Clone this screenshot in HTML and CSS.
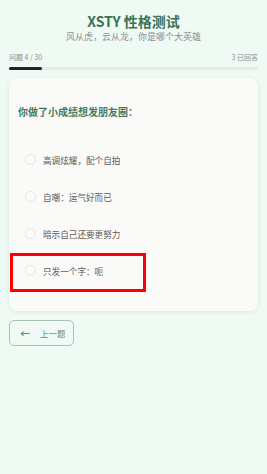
FILE: index.html
```html
<!DOCTYPE html>
<html lang="zh">
  <head>
    <meta charset="UTF-8" />
    <meta name="viewport" content="width=device-width, initial-scale=1.0" />
    <title>XSTY 性格测试</title>
    <link rel="stylesheet" href="styles.css">
  </head>
  <body>
    <div class="header">
      <h1>XSTY 性格测试</h1>
      <p class="subtitle">风从虎，云从龙，你是哪个大英雄</p>
    </div>

    <div class="progress-info">
      <span>问题 4 / 30</span>
      <span>3 已回答</span>
    </div>
    <div class="progress-bar">
      <div class="progress-fill" style="width: 13.3%"></div>
    </div>

    <div class="card">
      <h3 class="question">你做了小成绩想发朋友圈：</h3>
      <div class="options">
        <div class="option"><span class="radio"></span><span>高调炫耀，配个自拍</span></div>
        <div class="option"><span class="radio"></span><span>自嘲：运气好而已</span></div>
        <div class="option"><span class="radio"></span><span>暗示自己还要更努力</span></div>
        <div class="option marked"><span class="radio"></span><span>只发一个字：呃</span></div>
      </div>
    </div>

    <button class="back-btn"><span class="arrow">&larr;</span>上一题</button>
  </body>
</html>
```

FILE: styles.css
```css
body {
  font-family: "Noto Sans CJK SC", "Noto Sans", sans-serif;
  background-color: #f0faf5;
  margin: 0;
  padding: 12px 9px 0;
  color: #555;
}
.header {
  text-align: center;
}
h1 {
  margin: 0;
  font-size: 14px;
  line-height: 18px;
  color: #3a7356;
}
.subtitle {
  margin: 1px 0 0;
  font-size: 9px;
  line-height: 12px;
  color: #8a8f8c;
}
.progress-info {
  display: flex;
  justify-content: space-between;
  margin-top: 9px;
  font-size: 7px;
  line-height: 10px;
  color: #8a8f8c;
}
.progress-bar {
  margin-top: 5px;
  height: 3px;
  background-color: #e6ebe8;
  border-radius: 2px;
}
.progress-fill {
  height: 100%;
  background-color: #222;
  border-radius: 2px;
}
.card {
  margin-top: 8px;
  padding: 27px 9px 22px;
  background-color: #fafaf8;
  border-radius: 8px;
  box-shadow: 0 1px 5px rgba(0, 0, 0, 0.08);
}
.question {
  margin: 0 0 22px;
  font-size: 10px;
  line-height: 14px;
  color: #457a62;
}
.option {
  position: relative;
  display: flex;
  align-items: center;
  gap: 7px;
  height: 37px;
  padding-left: 7px;
  font-size: 8.6px;
  color: #5a5a5a;
}
.radio {
  width: 9px;
  height: 9px;
  border: 1px solid #e4e6e4;
  border-radius: 50%;
  background-color: #fbfbfa;
}
.marked::after {
  content: "";
  position: absolute;
  left: -8px;
  top: 1px;
  width: 130px;
  height: 33px;
  border: 3px solid #ff0000;
}
.back-btn {
  margin-top: 9px;
  display: flex;
  align-items: center;
  gap: 10px;
  width: 65px;
  height: 26px;
  padding: 0 0 0 10px;
  border: 1px solid #a9c2b6;
  border-radius: 5px;
  background-color: transparent;
  font-family: inherit;
  font-size: 8.5px;
  color: #6b8a7b;
}
.arrow {
  font-size: 10px;
  font-weight: bold;
}
```
